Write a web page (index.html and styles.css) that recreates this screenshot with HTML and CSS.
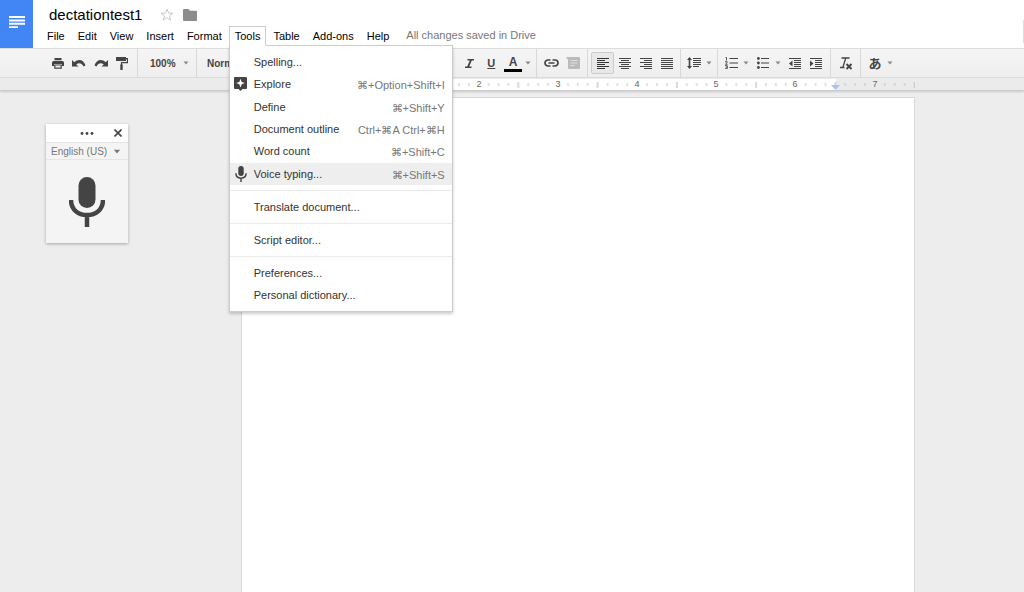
FILE: index.html
```html
<!DOCTYPE html>
<html lang="en">
<head>
    <meta charset="UTF-8">
    <meta name="viewport" content="width=device-width, initial-scale=1.0">
    <title>dectationtest1</title>
    <link rel="stylesheet" href="styles.css">
</head>
<body>
    <!-- Shared icons -->
    <svg class="sprite" aria-hidden="true">
        <symbol id="arrow" viewBox="0 0 6 4"><path d="M0.5 0.5h5L3 3.5z"/></symbol>
        <symbol id="mic" viewBox="0 0 36 50">
            <rect x="9.500" y="0" width="17" height="31" rx="8.500"/>
            <path d="M2 23c0 9.500 7 15 16 15s16-5.500 16-15M18 38v12" fill="none" stroke="currentColor" stroke-width="4.500"/>
        </symbol>
    </svg>

    <header class="header">
        <a href="#" class="logo" aria-label="Docs home">
            <svg width="16" height="12" viewBox="0 0 16 12"><path d="M0 0h16v2H0zM0 3.400h16v2H0zM0 6.800h16v2H0zM0 10.200h9v1.800H0z"/></svg>
        </a>
        <div class="header-main">
            <div class="title-row">
                <h1>dectationtest1</h1>
                <button class="title-icon star" aria-label="Star">
                    <svg width="14" height="14" viewBox="0 0 14 14"><path d="M7 1.200l1.700 4h4.200L9.500 7.900l1.300 4.300L7 9.700l-3.800 2.500 1.300-4.300L1.100 5.200h4.200z" fill="none" stroke="currentColor"/></svg>
                </button>
                <button class="title-icon folder" aria-label="Move to folder">
                    <svg width="14" height="12" viewBox="0 0 14 12"><path d="M1 0h4.500L7 1.700h6a1 1 0 0 1 1 1V11a1 1 0 0 1-1 1H1a1 1 0 0 1-1-1V1a1 1 0 0 1 1-1z"/></svg>
                </button>
            </div>
            <nav class="menubar">
                <button>File</button>
                <button>Edit</button>
                <button>View</button>
                <button>Insert</button>
                <button>Format</button>
                <div class="menu-holder">
                    <button class="open" aria-expanded="true">Tools</button>
                    <div class="menu">
                        <div class="menu-group menu-group-main">
                            <button class="menu-item"><span class="menu-icon"></span><span>Spelling...</span></button>
                            <button class="menu-item">
                                <span class="menu-icon"><svg width="13" height="14" viewBox="0 0 13 14"><path d="M1 0h11a1 1 0 0 1 1 1v10a1 1 0 0 1-1 1H8.500L6.500 14l-2-2H1a1 1 0 0 1-1-1V1a1 1 0 0 1 1-1z"/><path class="spark" d="M6.500 1.800L7.700 4.900 10.800 6.100 7.700 7.300 6.500 10.400 5.300 7.300 2.200 6.100 5.300 4.900z"/></svg></span>
                                <span>Explore</span><kbd>⌘+Option+Shift+I</kbd>
                            </button>
                            <button class="menu-item"><span class="menu-icon"></span><span>Define</span><kbd>⌘+Shift+Y</kbd></button>
                            <button class="menu-item"><span class="menu-icon"></span><span>Document outline</span><kbd>Ctrl+⌘A Ctrl+⌘H</kbd></button>
                            <button class="menu-item"><span class="menu-icon"></span><span>Word count</span><kbd>⌘+Shift+C</kbd></button>
                            <button class="menu-item active">
                                <span class="menu-icon"><svg width="12" height="16"><use href="#mic"/></svg></span>
                                <span>Voice typing...</span><kbd>⌘+Shift+S</kbd>
                            </button>
                        </div>
                        <div class="menu-group">
                            <button class="menu-item"><span class="menu-icon"></span><span>Translate document...</span></button>
                        </div>
                        <div class="menu-group">
                            <button class="menu-item"><span class="menu-icon"></span><span>Script editor...</span></button>
                        </div>
                        <div class="menu-group">
                            <button class="menu-item"><span class="menu-icon"></span><span>Preferences...</span></button>
                            <button class="menu-item"><span class="menu-icon"></span><span>Personal dictionary...</span></button>
                        </div>
                    </div>
                </div>
                <button>Table</button>
                <button>Add-ons</button>
                <button>Help</button>
                <span class="save-status">All changes saved in Drive</span>
            </nav>
        </div>
        <span class="header-edge"></span>
    </header>

    <div class="toolbar">
        <div class="group group-file">
            <button class="tool" aria-label="Print"><svg width="12" height="11" viewBox="0 0 12 11"><path d="M2.500 0h7v2.200h-7zM1.500 3h9A1.500 1.500 0 0 1 12 4.500V8H10V6H2v2H0V4.500A1.500 1.500 0 0 1 1.500 3z"/><path d="M2.800 7h6.400v3.200H2.800z" fill="none" stroke="currentColor" stroke-width="1.200"/></svg></button>
            <button class="tool" aria-label="Undo"><svg width="14" height="8" viewBox="0 0 14 8"><path d="M0 1v6.500h6.500L4.300 5.400C6.600 3.600 9.800 4 11.500 7.500L13.500 6.500C12 1 6.500-.8 2.300 3.300z"/></svg></button>
            <button class="tool" aria-label="Redo"><svg width="14" height="8" viewBox="0 0 14 8"><path d="M14 1v6.500H7.500L9.700 5.400C7.400 3.600 4.200 4 2.500 7.500L.5 6.500C2 1 7.500-.8 11.700 3.300z"/></svg></button>
            <button class="tool" aria-label="Paint format"><svg width="12" height="13" viewBox="0 0 12 13"><path d="M0 0h10v4H0z"/><path d="M10 1.700h1.400v4H5.500v3" fill="none" stroke="currentColor" stroke-width="1.200"/><path d="M4.300 7.500h2.400V13H4.300z"/></svg></button>
        </div>
        <label class="group pick pick-zoom">
            <select aria-label="Zoom"><option>100%</option></select>
            <svg width="6" height="4"><use href="#arrow"/></svg>
        </label>
        <label class="group pick pick-style">
            <select aria-label="Styles"><option>Normal text</option></select>
            <svg width="6" height="4"><use href="#arrow"/></svg>
        </label>
        <label class="group pick pick-font">
            <select aria-label="Font"><option>Arial</option></select>
            <svg width="6" height="4"><use href="#arrow"/></svg>
        </label>
        <label class="group pick pick-size">
            <select aria-label="Font size"><option>11</option></select>
            <svg width="6" height="4"><use href="#arrow"/></svg>
        </label>
        <div class="group group-text">
            <button class="tool letter">B</button>
            <button class="tool" aria-label="Italic"><svg width="9" height="9" viewBox="0 0 9 9"><path d="M2.500 0H9v1.500H6.800L4.200 7.500h2.300V9H0V7.500h2.200l2.600-6H2.500z"/></svg></button>
            <button class="tool letter underline">U</button>
            <button class="tool drop letter" aria-label="Text colour"><span class="text-color">A</span><svg width="6" height="4"><use href="#arrow"/></svg></button>
        </div>
        <div class="group group-insert">
            <button class="tool" aria-label="Insert link"><svg width="15" height="8" viewBox="0 0 15 8"><path d="M6.500 1H4a3 3 0 0 0 0 6h2.500M8.500 1H11a3 3 0 0 1 0 6H8.500M4.500 4h6" fill="none" stroke="currentColor" stroke-width="1.700"/></svg></button>
            <button class="tool disabled" aria-label="Add comment" disabled><svg width="14" height="12" viewBox="0 0 14 12"><path d="M0 0h13a1 1 0 0 1 1 1v10a1 1 0 0 1-1 1H3a1 1 0 0 1-1-1V3z"/><path d="M4.500 3.500h7M4.500 6h7M4.500 8.500h4" stroke="#ddd"/></svg></button>
        </div>
        <div class="group group-align">
            <button class="tool pressed" aria-label="Align left"><svg width="12" height="11" viewBox="0 0 12 11"><path d="M0 .5h12M0 2.500h8M0 4.500h12M0 6.500h8M0 8.500h12M0 10.500h8" stroke="currentColor"/></svg></button>
            <button class="tool" aria-label="Align centre"><svg width="12" height="11" viewBox="0 0 12 11"><path d="M0 .5h12M2 2.500h8M0 4.500h12M2 6.500h8M0 8.500h12M2 10.500h8" stroke="currentColor"/></svg></button>
            <button class="tool" aria-label="Align right"><svg width="12" height="11" viewBox="0 0 12 11"><path d="M0 .5h12M4 2.500h8M0 4.500h12M4 6.500h8M0 8.500h12M4 10.500h8" stroke="currentColor"/></svg></button>
            <button class="tool" aria-label="Justify"><svg width="12" height="11" viewBox="0 0 12 11"><path d="M0 .5h12M0 2.500h12M0 4.500h12M0 6.500h12M0 8.500h12M0 10.500h12" stroke="currentColor"/></svg></button>
        </div>
        <div class="group group-spacing">
            <button class="tool drop" aria-label="Line spacing"><span><svg width="14" height="12" viewBox="0 0 14 12"><path d="M2.500 0L5 3H3.300v6H5l-2.500 3L0 9h1.700V3H0z"/><path d="M6 1.500h8M6 3.500h8M6 5.500h8M6 7.500h8M6 9.500h6" stroke="currentColor"/></svg></span><svg width="6" height="4"><use href="#arrow"/></svg></button>
        </div>
        <div class="group group-lists">
            <button class="tool drop" aria-label="Numbered list"><span><svg width="13" height="12" viewBox="0 0 13 12"><path d="M4.500 1.500H13M4.500 6H13M4.500 10.500H13" stroke="currentColor" stroke-width="1.200"/><path d="M.5.500h1v3M0 4.700h2.200v.8L.5 7.300h2M0 8.700h2.300v3H0M.8 10.200h1.500" fill="none" stroke="currentColor" stroke-width=".9"/></svg></span><svg width="6" height="4"><use href="#arrow"/></svg></button>
            <button class="tool drop" aria-label="Bulleted list"><span><svg width="12" height="12" viewBox="0 0 12 12"><path d="M4 1.500h8M4 6h8M4 10.500h8" stroke="currentColor" stroke-width="1.200"/><circle cx="1.400" cy="1.500" r="1.400"/><circle cx="1.400" cy="6" r="1.400"/><circle cx="1.400" cy="10.500" r="1.400"/></svg></span><svg width="6" height="4"><use href="#arrow"/></svg></button>
            <button class="tool" aria-label="Decrease indent"><svg width="12" height="11" viewBox="0 0 12 11"><path d="M0 .5h12M5 2.500h7M5 4.500h7M5 6.500h7M5 8.500h7M0 10.500h12" stroke="currentColor"/><path d="M3.500 2.500v6L0 5.500z"/></svg></button>
            <button class="tool" aria-label="Increase indent"><svg width="12" height="11" viewBox="0 0 12 11"><path d="M0 .5h12M5 2.500h7M5 4.500h7M5 6.500h7M5 8.500h7M0 10.500h12" stroke="currentColor"/><path d="M0 2.500v6l3.500-3z"/></svg></button>
        </div>
        <div class="group group-clear">
            <button class="tool" aria-label="Clear formatting"><svg width="14" height="13" viewBox="0 0 14 13"><path d="M2.500 1H10.500M6.800 1L3.800 10.500M1 10.500h4.500" fill="none" stroke="currentColor" stroke-width="1.300"/><path d="M7.500 7l5 5M12.500 7l-5 5" stroke="currentColor" stroke-width="1.900"/></svg></button>
        </div>
        <div class="group group-input">
            <button class="tool drop" aria-label="Input tools"><span class="kana">あ</span><svg width="6" height="4"><use href="#arrow"/></svg></button>
        </div>
    </div>

    <div class="ruler">
        <svg class="ruler-scale" viewBox="0 0 674 12" aria-label="Ruler">
            <defs>
                <!-- one inch, starting at a number -->
                <pattern id="inch" x="0" y="0" width="79.250" height="12" patternUnits="userSpaceOnUse">
                    <path d="M9.900 4v3M19.800 4v3M29.700 4v3M49.500 4v3M59.400 4v3M69.300 4v3" stroke="#c4c4c4"/>
                    <path d="M39.600 3v6" stroke="#b4b4b4"/>
                </pattern>
            </defs>
            <rect x="79" width="516" height="11" fill="#fff"/>
            <rect width="674" height="12" fill="url(#inch)"/>
            <g class="ruler-numbers">
                <text x="238" y="8">2</text>
                <text x="317" y="8">3</text>
                <text x="396" y="8">4</text>
                <text x="475" y="8">5</text>
                <text x="554" y="8">6</text>
                <text x="634" y="8">7</text>
            </g>
            <path d="M590 6h9l-4.500 5z" fill="#a4c5fb"/>
        </svg>
    </div>

    <main class="workspace">
        <div class="page" contenteditable="true" aria-label="Document"></div>
        <aside class="voice">
            <div class="voice-bar">
                <svg width="14" height="3" viewBox="0 0 14 3"><circle cx="2" cy="1.500" r="1.400"/><circle cx="7" cy="1.500" r="1.400"/><circle cx="12" cy="1.500" r="1.400"/></svg>
                <button class="voice-close" aria-label="Close"><svg width="8" height="8" viewBox="0 0 8 8"><path d="M.5.500l7 7M7.500.500l-7 7" stroke="currentColor" stroke-width="1.600"/></svg></button>
            </div>
            <label class="voice-language">
                <select aria-label="Language"><option>English (US)</option></select>
                <svg width="8" height="5" viewBox="0 0 6 4"><use href="#arrow"/></svg>
            </label>
            <button class="voice-mic" aria-label="Click to speak"><svg width="36" height="50"><use href="#mic"/></svg></button>
        </aside>
    </main>
</body>
</html>
```
FILE: styles.css
```css
* {
    box-sizing: border-box;
}
body {
    margin: 0;
    height: 100vh;
    display: flex;
    flex-direction: column;
    overflow: hidden;
    background-color: #ededed;
    font-family: "Liberation Sans", Arial, sans-serif;
    font-size: 11px;
    color: #222;
}
button, select {
    margin: 0;
    padding: 0;
    border: none;
    background: none;
    font: inherit;
    color: inherit;
}
svg {
    display: block;
    fill: currentColor;
}
.sprite {
    position: absolute;
    width: 0;
    height: 0;
}

/* Header */
.header {
    display: flex;
    flex: none;
    height: 48px;
    background-color: #fff;
}
.logo {
    display: flex;
    flex: none;
    justify-content: center;
    width: 33px;
    padding-top: 16px;
    background-color: #4285f4;
    color: #fff;
}
.header-main {
    flex: 1;
    padding-left: 8px;
}
.title-row {
    display: flex;
    align-items: center;
    height: 26px;
    padding: 3px 0 0 8px;
}
.title-row h1 {
    margin: 0;
    font-size: 15px;
    font-weight: normal;
    color: #000;
}
.star {
    margin-left: 18px;
    color: #c8c8c8;
}
.folder {
    margin-left: 9px;
    color: #8c8c8c;
}
.menubar {
    display: flex;
    gap: 1px;
    height: 20px;
    color: #000;
}
.menubar > button, .open {
    height: 19px;
    padding: 0 5px;
    border: 1px solid transparent;
}
.menu-holder {
    position: relative;
}
.menu-holder .open {
    position: relative;
    z-index: 3;
    height: 20px;
    padding-bottom: 1px;
    border-color: #ccc;
    border-bottom-color: #fff;
    background-color: #fff;
}
.save-status {
    padding-left: 10px;
    line-height: 19px;
    color: #777;
}
.header-edge {
    width: 1px;
    height: 23px;
    margin-top: 20px;
    background-color: #ddd;
}

/* Tools menu */
.menu {
    position: absolute;
    top: 19px;
    left: 0;
    z-index: 2;
    width: 224px;
    border: 1px solid #ccc;
    background-color: #fff;
    box-shadow: 0 2px 3px rgba(0, 0, 0, 0.2);
    color: #333;
}
.menu-group {
    display: grid;
    grid-auto-rows: 22px;
    padding: 5px 0;
}
.menu-group + .menu-group {
    border-top: 1px solid #ebebeb;
}
.menu-group-main {
    grid-auto-rows: 1fr;
    height: 144px;
}
.menu-item {
    display: flex;
    align-items: center;
    padding-right: 7px;
    text-align: left;
}
.menu-item.active {
    background-color: #eee;
}
.menu-icon {
    display: flex;
    justify-content: center;
    width: 24px;
    padding-right: 2px;
    color: #444;
}
.spark {
    fill: #fff;
}
.menu-item kbd {
    margin-left: auto;
    padding-top: 3px;
    font-family: inherit;
    font-size: 11px;
    color: #777;
}

/* Toolbar */
.toolbar {
    display: flex;
    flex: none;
    height: 30px;
    border-top: 1px solid #ddd;
    border-bottom: 1px solid #ddd;
    background-image: linear-gradient(#f5f5f5, #eee);
    color: #444;
}
.group {
    display: flex;
    flex: none;
    align-items: center;
    border-right: 1px solid #d8d8d8;
}
.tool {
    display: flex;
    flex: 1;
    align-items: center;
    justify-content: center;
    height: 22px;
}
.drop {
    flex: none;
    justify-content: flex-start;
    width: 32px;
}
.drop > span {
    display: flex;
    justify-content: center;
    width: 22px;
}
.drop > svg {
    margin-left: 1px;
}
.drop > svg, .pick > svg {
    color: #888;
}
.pressed {
    border: 1px solid #ccc;
    border-radius: 2px;
    background-color: #e8e8e8;
    color: #333;
}
.disabled {
    color: #bbb;
}
.letter {
    font-size: 12px;
    font-weight: bold;
}
.underline {
    font-size: 11px;
    text-decoration: underline;
}
.drop > .text-color {
    width: 18px;
    margin: 0 2px;
    border-bottom: 3px solid #000;
}
.kana {
    font-family: "Noto Sans CJK JP", sans-serif;
    font-size: 13px;
    font-weight: bold;
    line-height: 20px;
}
.pick {
    justify-content: space-between;
    padding: 0 7px 0 10px;
}
.pick select {
    flex: 1;
    min-width: 0;
    appearance: none;
    font-size: 10px;
    font-weight: bold;
}
.group-file {
    width: 138px;
    padding: 0 4px 0 47px;
}
.pick-zoom {
    width: 59px;
    padding-left: 12px;
}
.pick-style {
    width: 104px;
}
.pick-font {
    width: 85px;
}
.pick-size {
    width: 48px;
}
.group-text {
    width: 103px;
    padding: 0 2px 0 4px;
}
.group-insert {
    width: 51px;
    padding: 0 4px;
}
.group-align {
    width: 93px;
    padding: 0 3px;
}
.group-spacing {
    width: 37px;
    padding-left: 2px;
}
.group-lists {
    width: 113px;
    padding: 0 3px 0 2px;
}
.group-clear {
    width: 30px;
}
.group-input {
    padding-left: 3px;
    border-right: none;
}

/* Ruler and page share the same centre line */
.ruler {
    display: flex;
    flex: none;
    justify-content: center;
    height: 13px;
    padding: 1px 0 0 132px;
    border-bottom: 1px solid #ccc;
    background-color: #ebebeb;
    box-shadow: 0 1px 2px rgba(0, 0, 0, 0.15);
}
.ruler-scale {
    width: 674px;
    height: 12px;
}
.ruler-numbers {
    fill: #666;
    font-size: 9px;
    text-anchor: middle;
}
.workspace {
    position: relative;
    display: flex;
    flex: 1;
    justify-content: center;
    padding: 6px 0 0 132px;
}
.page {
    width: 674px;
    border: 1px solid #d8d8d8;
    border-bottom: none;
    background-color: #fff;
    outline: none;
}

/* Voice typing box */
.voice {
    position: absolute;
    top: 33px;
    left: 46px;
    width: 82px;
    background-color: #f4f4f4;
    box-shadow: 0 1px 3px rgba(0, 0, 0, 0.3);
    color: #444;
}
.voice-bar {
    display: flex;
    align-items: center;
    justify-content: flex-end;
    gap: 20px;
    height: 18px;
    padding-right: 6px;
    background-color: #fff;
}
.voice-language {
    display: flex;
    align-items: center;
    height: 18px;
    padding: 0 7px 0 5px;
    border-top: 1px solid #e5e5e5;
    border-bottom: 1px solid #e5e5e5;
    color: #777;
}
.voice-language select {
    flex: 1;
    min-width: 0;
    appearance: none;
    font-size: 10px;
}
.voice-mic {
    display: flex;
    justify-content: center;
    width: 100%;
    padding: 17px 0 16px;
}
```
